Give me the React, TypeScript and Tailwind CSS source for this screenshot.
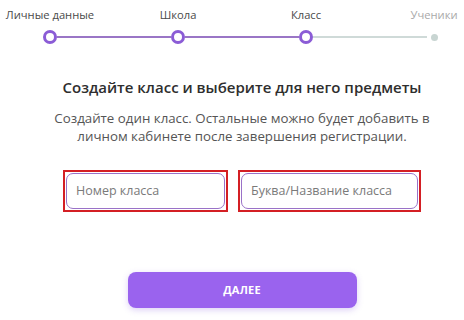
import React from "react";

const steps = [
  { label: "Личные данные", done: true },
  { label: "Школа", done: true },
  { label: "Класс", done: true },
  { label: "Ученики", done: false },
];

function Stepper() {
  return (
    <div className="pl-[43px] pr-[23px] pt-[6px]">
      <div className="flex justify-between">
        {steps.map((s) => (
          <div key={s.label} className="flex w-[14px] justify-center">
            <span
              className={`whitespace-nowrap text-[11.2px] leading-[18px] ${
                s.done ? "text-[#4a4a4a]" : "text-[#a9a9a9]"
              }`}
            >
              {s.label}
            </span>
          </div>
        ))}
      </div>
      <div className="mt-[6px] flex items-center">
        <div className="h-[14px] w-[14px] rounded-full border-[3.5px] border-[#8b5cd6] bg-white" />
        <div className="h-[2px] flex-1 bg-[#9a76c6]" />
        <div className="h-[14px] w-[14px] rounded-full border-[3.5px] border-[#8b5cd6] bg-white" />
        <div className="h-[2px] flex-1 bg-[#9a76c6]" />
        <div className="h-[14px] w-[14px] rounded-full border-[3.5px] border-[#8b5cd6] bg-white" />
        <div className="h-[2px] flex-1 bg-[#cfdad8]" />
        <div className="flex h-[14px] w-[14px] items-center justify-center">
          <div className="h-[7px] w-[7px] rounded-full bg-[#c8d5d2]" />
        </div>
      </div>
    </div>
  );
}

function Field({ placeholder, width }: { placeholder: string; width: string }) {
  return (
    <div className={`border-2 border-[#d41f24] p-px ${width}`}>
      <div className="flex h-[36px] items-center rounded-[7px] border-[1.5px] border-[#9a72c8] bg-white px-[9px]">
        <input
          className="w-full bg-transparent text-[12.5px] text-[#333] outline-none placeholder:text-[#7a7a7a]"
          placeholder={placeholder}
        />
      </div>
    </div>
  );
}

export default function App() {
  return (
    <div className="h-[320px] w-[464px] overflow-hidden bg-white font-['Open_Sans',sans-serif]">
      <Stepper />
      <div className="flex flex-col items-center pl-[20px]">
        <h1 className="mt-[31px] whitespace-nowrap text-[15px] font-semibold leading-[24px] text-[#2e2e2e]">
          Создайте класс и выберите для него предметы
        </h1>
        <p className="mt-[10px] whitespace-nowrap text-center text-[13.3px] leading-[18px] text-[#555]">
          Создайте один класс. Остальные можно будет добавить в
          <br />
          личном кабинете после завершения регистрации.
        </p>
        <div className="mt-[25px] flex gap-[10px]">
          <Field placeholder="Номер класса" width="w-[165px]" />
          <Field placeholder="Буква/Название класса" width="w-[183px]" />
        </div>
        <button className="mt-[60px] h-[36px] w-[229px] rounded-[8px] bg-[#9a63ee] text-[11px] font-bold tracking-[0.2px] text-white shadow-[0_2px_6px_rgba(120,70,220,0.25)]">
          ДАЛЕЕ
        </button>
      </div>
    </div>
  );
}
